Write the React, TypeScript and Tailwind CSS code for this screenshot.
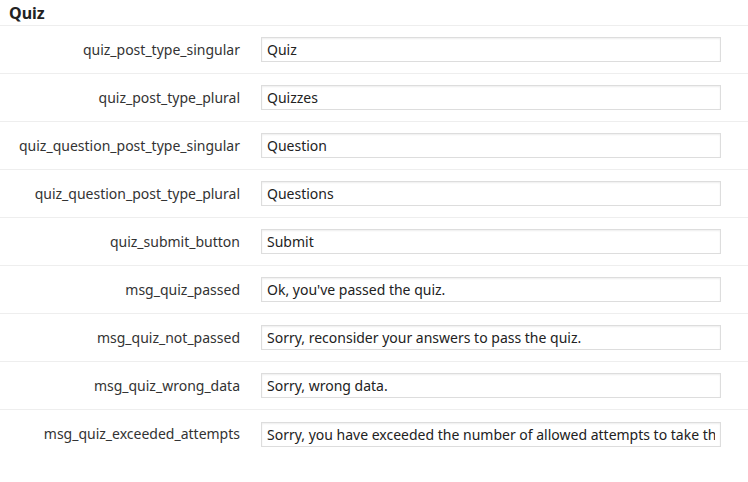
import React from "react";

const rows: [string, string][] = [
  ["quiz_post_type_singular", "Quiz"],
  ["quiz_post_type_plural", "Quizzes"],
  ["quiz_question_post_type_singular", "Question"],
  ["quiz_question_post_type_plural", "Questions"],
  ["quiz_submit_button", "Submit"],
  ["msg_quiz_passed", "Ok, you've passed the quiz."],
  ["msg_quiz_not_passed", "Sorry, reconsider your answers to pass the quiz."],
  ["msg_quiz_wrong_data", "Sorry, wrong data."],
  ["msg_quiz_exceeded_attempts", "Sorry, you have exceeded the number of allowed attempts to take this quiz."],
];

export default function App() {
  return (
    <div className="w-[748px] h-[482px] bg-white text-[#333] font-['Noto_Sans',Arial,sans-serif]">
      <h2 className="h-[26px] pl-[9px] pt-[4px] text-[16px] leading-[18px] font-bold text-[#222] border-b border-[#eee]">
        Quiz
      </h2>
      {rows.map(([label, value], i) => (
        <div
          key={label}
          className={`flex items-center h-[48px] ${i < rows.length - 1 ? "border-b border-[#eee]" : ""}`}
        >
          <label className="w-[240px] text-right text-[14px] leading-[16px] text-[#333] shrink-0">
            {label}
          </label>
          <input
            readOnly
            value={value}
            className="ml-[21px] w-[460px] h-[25px] border border-[#ddd] shadow-[inset_0_1px_2px_rgba(0,0,0,0.07)] px-[5px] text-[14px] text-[#222] outline-none bg-white font-['Noto_Sans',Arial,sans-serif]"
          />
        </div>
      ))}
    </div>
  );
}
